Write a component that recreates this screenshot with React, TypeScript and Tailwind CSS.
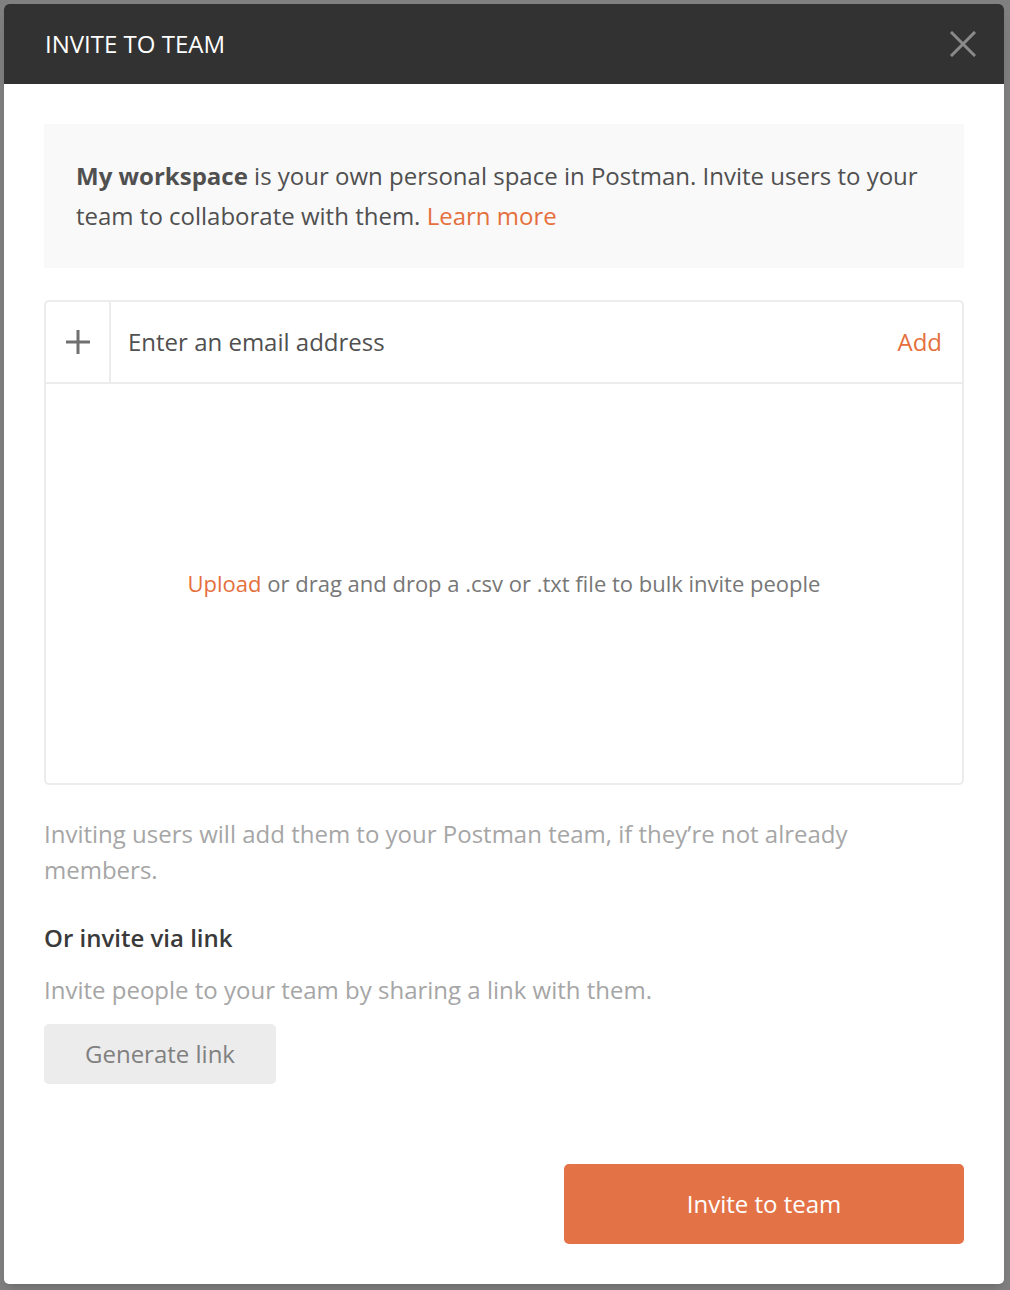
import React from 'react';

const font = { fontFamily: '"Open Sans", "Noto Sans", sans-serif' };

const CloseIcon: React.FC = () => (
    <svg width="26" height="26" viewBox="0 0 26 26" fill="none">
        <path d="M2 2L24 24M24 2L2 24" stroke="#8a8a8a" strokeWidth="3" strokeLinecap="square" />
    </svg>
);

const PlusIcon: React.FC = () => (
    <svg width="26" height="26" viewBox="0 0 26 26" fill="none">
        <path d="M13 1V25M1 13H25" stroke="#707070" strokeWidth="3" />
    </svg>
);

const App: React.FC = () => {
    return (
        <div className="w-[1010px] h-[1290px] bg-[#808080] p-1" style={font}>
            <div className="w-[1000px] h-[1280px] bg-white rounded-[5px] overflow-hidden flex flex-col shadow-lg">
                <div className="h-[80px] bg-[#323232] flex items-center justify-between pl-[41px] pr-[27px]">
                    <h1 className="text-[24px] text-white">INVITE TO TEAM</h1>
                    <button className="flex items-center justify-center w-[28px] h-[28px]">
                        <CloseIcon />
                    </button>
                </div>

                <div className="flex flex-col px-10 pt-10">
                    <div className="bg-[#f9f9f9] pl-[32px] pr-[30px] py-8 text-[24px] leading-[40px] text-[#505050]">
                        <span className="font-bold">My workspace</span> is your own personal space in Postman. Invite users to your team to collaborate with them.{' '}
                        <span className="text-[#e5703d]">Learn more</span>
                    </div>

                    <div className="mt-8 border-2 border-[#ececec] rounded-[5px]">
                        <div className="flex items-center h-[82px] border-b-2 border-[#ececec]">
                            <div className="w-[65px] h-full flex items-center justify-center border-r-2 border-[#ececec]">
                                <PlusIcon />
                            </div>
                            <div className="flex-1 pl-[17px] text-[24px] text-[#505050]">Enter an email address</div>
                            <div className="pr-[20px] text-[24px] text-[#e5703d]">Add</div>
                        </div>
                        <div className="h-[399px] flex items-center justify-center text-[22px] text-[#777777]">
                            <span className="text-[#e5703d]">Upload</span>&nbsp;or drag and drop a .csv or .txt file to bulk invite people
                        </div>
                    </div>

                    <p className="mt-[31px] text-[24px] leading-[36px] text-[#a6a6a6] pr-[100px]">
                        Inviting users will add them to your Postman team, if they’re not already members.
                    </p>

                    <h2 className="mt-8 text-[24px] leading-[36px] text-[#3a3a3a] font-semibold">Or invite via link</h2>
                    <p className="mt-4 text-[24px] leading-[36px] text-[#a6a6a6]">
                        Invite people to your team by sharing a link with them.
                    </p>

                    <div className="mt-4">
                        <button className="w-[232px] h-[60px] bg-[#ececec] rounded-[5px] text-[24px] text-[#808080]">
                            Generate link
                        </button>
                    </div>

                    <div className="mt-20 flex justify-end">
                        <button className="w-[400px] h-[80px] bg-[#e37347] rounded-[5px] text-[24px] text-white">
                            Invite to team
                        </button>
                    </div>
                </div>
            </div>
        </div>
    );
};

export default App;
